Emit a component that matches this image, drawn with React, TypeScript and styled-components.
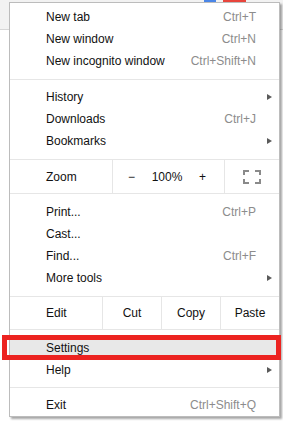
import React from 'react'
import styled, { createGlobalStyle } from 'styled-components'

const GlobalStyle = createGlobalStyle`
  html, body {
    margin: 0;
    padding: 0;
    background: #ffffff;
  }
  body {
    font-family: "Liberation Sans", Arial, sans-serif;
    font-size: 12px;
    color: #111;
  }
`

const Page = styled.div`
  position: relative;
  width: 283px;
  height: 422px;
  overflow: hidden;
  background: #ffffff;
`

const Toolbar = styled.div`
  height: 29px;
  background: #f2f2f2;
  border-bottom: 1px solid #d6d6d6;
  display: flex;
  align-items: flex-start;
  padding-left: 204px;
  gap: 7px;
`

const TabMark = styled.div<{ color: string; width: number }>`
  width: ${({ width }) => width}px;
  height: 2px;
  background: ${({ color }) => color};
`

const Menu = styled.div`
  position: absolute;
  left: 9px;
  top: 2px;
  width: 271px;
  box-sizing: border-box;
  background: #ffffff;
  border: 1px solid #bcbcbc;
  box-shadow: 2px 2px 2px rgba(0, 0, 0, 0.35);
  padding: 3px 0 0;
  display: flex;
  flex-direction: column;
`

const Item = styled.div<{ highlighted?: boolean }>`
  position: relative;
  height: 22px;
  display: flex;
  align-items: center;
  padding: 0 7px 0 36px;
  background: ${({ highlighted }) => (highlighted ? '#e8e8e8' : 'transparent')};
`

const Label = styled.span`
  flex: 1;
  white-space: nowrap;
`

const Shortcut = styled.span`
  color: #8c8c8c;
  white-space: nowrap;
`

const ArrowSlot = styled.span`
  width: 16px;
  display: flex;
  justify-content: flex-end;
`

const Arrow = styled.span`
  width: 0;
  height: 0;
  border-left: 5px solid #5a5a5a;
  border-top: 3px solid transparent;
  border-bottom: 3px solid transparent;
`

const Separator = styled.div<{ above?: number; below?: number }>`
  height: 1px;
  background: #e6e6e6;
  margin: ${({ above = 7 }) => above}px 0 ${({ below = 6 }) => below}px;
`

const Spacer = styled.div`
  height: 7px;
`

const ButtonRow = styled.div<{ height: number }>`
  display: flex;
  height: ${({ height }) => height}px;
  border-bottom: 1px solid #e6e6e6;
`

const RowLabel = styled.div<{ width: number }>`
  width: ${({ width }) => width}px;
  display: flex;
  align-items: center;
  padding-left: 36px;
  box-sizing: border-box;
  border-right: 1px solid #e6e6e6;
`

const Cell = styled.div<{ width?: number; last?: boolean }>`
  ${({ width }) => (width ? `width: ${width}px;` : 'flex: 1;')}
  display: flex;
  align-items: center;
  justify-content: center;
  box-sizing: border-box;
  border-right: ${({ last }) => (last ? 'none' : '1px solid #e6e6e6')};
`

const ZoomGroup = styled.div`
  width: 112px;
  box-sizing: border-box;
  border-right: 1px solid #e6e6e6;
  display: flex;
  align-items: center;
  justify-content: space-between;
  padding: 0 18px 0 15px;
`

const Callout = styled.span`
  position: absolute;
  left: -8px;
  right: -2px;
  top: -2px;
  bottom: -1px;
  border: 5px solid #ec2320;
  pointer-events: none;
`

const FullscreenIcon = () => (
  <svg width="18" height="14" viewBox="0 0 18 14" fill="none" stroke="#8a8a8a" strokeWidth="2">
    <path d="M1 5V1h5M12 1h5v4M17 9v4h-5M6 13H1V9" />
  </svg>
)

type Entry = { label: string; shortcut?: string; sub?: boolean; highlighted?: boolean }

const MenuItem = ({ label, shortcut, sub, highlighted }: Entry) => (
  <Item highlighted={highlighted}>
    <Label>{label}</Label>
    {shortcut && <Shortcut>{shortcut}</Shortcut>}
    <ArrowSlot>{sub && <Arrow />}</ArrowSlot>
    {highlighted && <Callout />}
  </Item>
)

const groupOne: Entry[] = [
  { label: 'New tab', shortcut: 'Ctrl+T' },
  { label: 'New window', shortcut: 'Ctrl+N' },
  { label: 'New incognito window', shortcut: 'Ctrl+Shift+N' },
]

const groupTwo: Entry[] = [
  { label: 'History', sub: true },
  { label: 'Downloads', shortcut: 'Ctrl+J' },
  { label: 'Bookmarks', sub: true },
]

const groupThree: Entry[] = [
  { label: 'Print...', shortcut: 'Ctrl+P' },
  { label: 'Cast...' },
  { label: 'Find...', shortcut: 'Ctrl+F' },
  { label: 'More tools', sub: true },
]

const groupFour: Entry[] = [
  { label: 'Settings', highlighted: true },
  { label: 'Help', sub: true },
]

export default function App() {
  return (
    <Page>
      <GlobalStyle />
      <Toolbar>
        <TabMark color="#4a86e8" width={12} />
        <TabMark color="#e8453c" width={23} />
      </Toolbar>
      <Menu>
        {groupOne.map((e) => <MenuItem key={e.label} {...e} />)}
        <Separator />
        {groupTwo.map((e) => <MenuItem key={e.label} {...e} />)}
        <Separator below={0} />
        <ButtonRow height={33}>
          <RowLabel width={103}>Zoom</RowLabel>
          <ZoomGroup>
            <span>−</span>
            <span>100%</span>
            <span>+</span>
          </ZoomGroup>
          <Cell last>
            <FullscreenIcon />
          </Cell>
        </ButtonRow>
        <Spacer />
        {groupThree.map((e) => <MenuItem key={e.label} {...e} />)}
        <Separator below={0} />
        <ButtonRow height={32}>
          <RowLabel width={93}>Edit</RowLabel>
          <Cell width={59}>Cut</Cell>
          <Cell width={59}>Copy</Cell>
          <Cell last>Paste</Cell>
        </ButtonRow>
        <Spacer />
        {groupFour.map((e) => <MenuItem key={e.label} {...e} />)}
        <Separator above={6} below={6} />
        <MenuItem label="Exit" shortcut="Ctrl+Shift+Q" />
      </Menu>
    </Page>
  )
}
